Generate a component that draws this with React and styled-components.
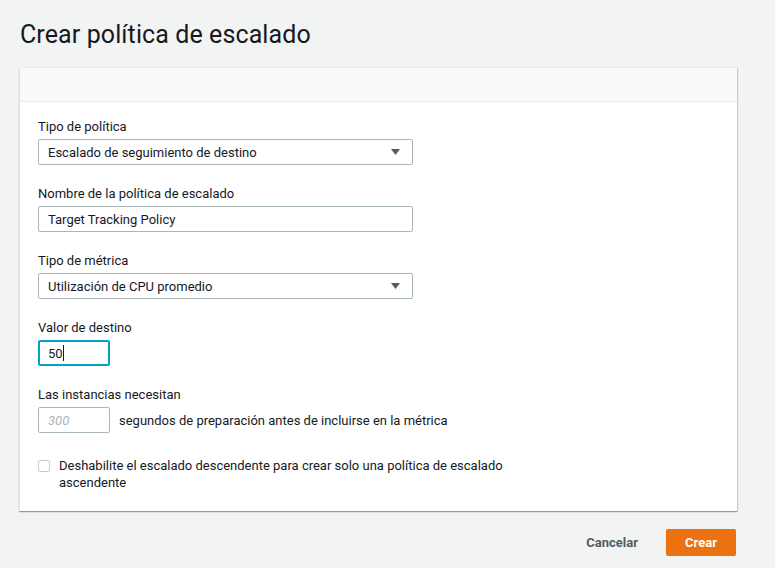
import React from "react";
import styled, { createGlobalStyle } from "styled-components";

const Global = createGlobalStyle`
  html, body { margin: 0; padding: 0; background: #f2f3f3; }
  body { font-family: Roboto, "Liberation Sans", sans-serif; color: #16191f; font-size: 13px; }
  * { box-sizing: border-box; }
`;

const Page = styled.div`
  padding: 20px 38px 0 20px;
  width: 775px;
`;

const Title = styled.h1`
  margin: 0 0 17px 0;
  font-size: 25px;
  font-weight: 400;
  line-height: 30px;
  color: #16191f;
  letter-spacing: 0.1px;
`;

const Panel = styled.div`
  margin-left: -1px;
  background: #fff;
  border-top: 1px solid #eaeded;
  border-left: 1px solid #e0e4e4;
  box-shadow: 0 1px 1px 0 rgba(0, 28, 36, 0.3), 1px 1px 1px 0 rgba(0, 28, 36, 0.15);
`;

const PanelHeader = styled.div`
  height: 34px;
  background: #fafafa;
  border-bottom: 1px solid #eaeded;
`;

const PanelBody = styled.div`
  padding: 17px 18px 20px 18px;
  display: flex;
  flex-direction: column;
  gap: 21px;
`;

const Field = styled.div`
  display: flex;
  flex-direction: column;
  gap: 4px;
`;

const Label = styled.label`
  line-height: 16px;
  font-size: 13px;
  color: #16191f;
`;

const Box = styled.div`
  position: relative;
  width: ${(p) => p.$w}px;
  height: 26px;
  border: ${(p) => (p.$focus ? "2px solid #00a1c9" : "1px solid #aab7b8")};
  border-radius: 2px;
  background: #fff;
  display: flex;
  align-items: center;
  padding-left: ${(p) => (p.$focus ? 8 : 9)}px;
  font-size: 13px;
  color: ${(p) => (p.$placeholder ? "#aab7b8" : "#16191f")};
  font-style: ${(p) => (p.$placeholder ? "italic" : "normal")};
`;

const Caret = styled.span`
  display: inline-block;
  width: 1px;
  height: 16px;
  background: #16191f;
`;

const Arrow = styled.svg`
  position: absolute;
  right: 12px;
  top: 9px;
`;

const Row = styled.div`
  display: flex;
  align-items: center;
  gap: 9px;
`;

const Text = styled.span`
  font-size: 13px;
  color: #16191f;
`;

const CheckRow = styled.div`
  display: flex;
  align-items: flex-start;
  gap: 9px;
  margin-top: 3px;
`;

const CheckBox = styled.span`
  flex: none;
  width: 12px;
  height: 12px;
  margin-top: 3px;
  border: 1px solid #c6cccd;
  border-radius: 2px;
  background: #fff;
`;

const CheckText = styled.span`
  width: 460px;
  line-height: 17px;
  font-size: 13px;
`;

const Footer = styled.div`
  display: flex;
  justify-content: flex-end;
  align-items: center;
  gap: 28px;
  padding-top: 18px;
  margin-right: 1px;
`;

const LinkButton = styled.button`
  border: none;
  background: none;
  font-family: inherit;
  font-weight: 700;
  font-size: 13px;
  color: #545b64;
  padding: 0;
`;

const PrimaryButton = styled.button`
  border: none;
  border-radius: 2px;
  background: #ec7211;
  color: #fff;
  font-family: inherit;
  font-weight: 700;
  font-size: 13px;
  width: 70px;
  height: 27px;
`;

const DownArrow = () => (
  <Arrow width="9" height="6" viewBox="0 0 9 6">
    <path d="M0 0 H9 L4.5 6 Z" fill="#545b64" />
  </Arrow>
);

export default function App() {
  return (
    <>
      <Global />
      <Page>
        <Title>Crear política de escalado</Title>
        <Panel>
          <PanelHeader />
          <PanelBody>
            <Field>
              <Label>Tipo de política</Label>
              <Box $w={375}>
                Escalado de seguimiento de destino
                <DownArrow />
              </Box>
            </Field>
            <Field>
              <Label>Nombre de la política de escalado</Label>
              <Box $w={375}>Target Tracking Policy</Box>
            </Field>
            <Field>
              <Label>Tipo de métrica</Label>
              <Box $w={375}>
                Utilización de CPU promedio
                <DownArrow />
              </Box>
            </Field>
            <Field>
              <Label>Valor de destino</Label>
              <Box $w={72} $focus>
                50<Caret />
              </Box>
            </Field>
            <Field>
              <Label>Las instancias necesitan</Label>
              <Row>
                <Box $w={72} $placeholder>300</Box>
                <Text>segundos de preparación antes de incluirse en la métrica</Text>
              </Row>
            </Field>
            <CheckRow>
              <CheckBox />
              <CheckText>
                Deshabilite el escalado descendente para crear solo una política de escalado ascendente
              </CheckText>
            </CheckRow>
          </PanelBody>
        </Panel>
        <Footer>
          <LinkButton>Cancelar</LinkButton>
          <PrimaryButton>Crear</PrimaryButton>
        </Footer>
      </Page>
    </>
  );
}
